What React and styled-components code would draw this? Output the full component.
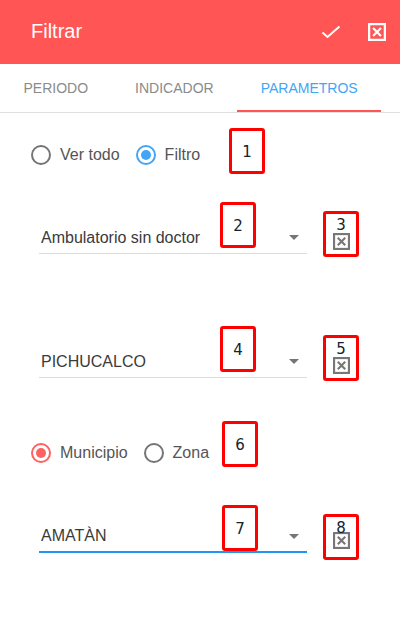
import React from 'react';
import styled, { createGlobalStyle } from 'styled-components';

const Global = createGlobalStyle`
  body {
    margin: 0;
    background: #fff;
    font-family: "Liberation Sans", Arial, sans-serif;
  }
`;

const Sheet = styled.div`
  position: relative;
  width: 400px;
  height: 622px;
  overflow: hidden;
  background: #fff;
`;

const Header = styled.div`
  height: 64px;
  background: #ff5555;
  display: flex;
  align-items: center;
  padding: 0 14px 0 31px;
  color: #fff;
`;

const Title = styled.div`
  flex: 1;
  font-size: 20px;
  margin-top: -1px;
`;

const HeaderButton = styled.div`
  display: flex;
  align-items: center;
  justify-content: center;
  margin-left: ${p => p.gap || 0}px;
`;

const TabBar = styled.div`
  display: flex;
  height: 48px;
  border-bottom: 1px solid #e0e0e0;
`;

const Tab = styled.div`
  display: flex;
  align-items: center;
  padding: 0 23.5px;
  font-size: 14px;
  text-transform: uppercase;
  color: ${p => (p.active ? '#42a5f5' : '#8a8a8a')};
  box-shadow: ${p => (p.active ? 'inset 0 -2px 0 #ff5555' : 'none')};
`;

const Content = styled.div`
  display: flex;
  flex-direction: column;
  padding-left: 31px;
`;

const RadioRow = styled.div`
  display: flex;
  align-items: center;
  height: 40px;
  margin-top: ${p => p.top}px;
`;

const RadioItem = styled.label`
  display: flex;
  align-items: center;
  margin-right: ${p => p.gap}px;
  font-size: 16px;
  color: #555;
`;

const RadioCircle = styled.span`
  box-sizing: border-box;
  width: 20px;
  height: 20px;
  border-radius: 50%;
  border: 2px solid ${p => p.color || '#757575'};
  margin-right: 9px;
  display: flex;
  align-items: center;
  justify-content: center;
  &::after {
    content: '';
    width: 10px;
    height: 10px;
    border-radius: 50%;
    background: ${p => (p.checked ? p.color : 'transparent')};
  }
`;

const SelectRow = styled.div`
  display: flex;
  align-items: center;
  margin-top: ${p => p.top}px;
  padding-left: 8px;
`;

const Select = styled.div`
  box-sizing: border-box;
  width: 268px;
  height: 32px;
  display: flex;
  align-items: center;
  justify-content: space-between;
  padding: 0 8px 0 2px;
  border-bottom: ${p => (p.focused ? '2px solid #2196f3' : '1px solid #dcdcdc')};
  font-size: 16px;
  color: #3a3a3a;
`;

const Arrow = styled.span`
  width: 0;
  height: 0;
  border-left: 5px solid transparent;
  border-right: 5px solid transparent;
  border-top: 5px solid #757575;
`;

const ClearButton = styled.div`
  margin-left: 26px;
  margin-top: 6px;
  width: 17px;
  height: 17px;
  display: flex;
`;

const Marker = styled.div`
  position: absolute;
  box-sizing: border-box;
  width: 36px;
  height: 46px;
  border: 3px solid #ff0000;
  border-radius: 3px;
  padding-top: ${p => (p.tight ? 3 : 13)}px;
  text-align: center;
  font-family: "DejaVu Sans", sans-serif;
  font-size: 15px;
  line-height: 16px;
  color: #13232e;
`;

const CheckIcon = () => (
  <svg width="20" height="14" viewBox="0 0 20 14">
    <path d="M1.5 7.5 L6.5 12 L18.5 1.5" fill="none" stroke="#fff" strokeWidth="2" />
  </svg>
);

const BoxX = ({ size, color, stroke }) => (
  <svg width={size} height={size} viewBox="0 0 16 16">
    <rect x="1" y="1" width="14" height="14" fill="none" stroke={color} strokeWidth={stroke} />
    <path d="M4.5 4.5 L11.5 11.5 M11.5 4.5 L4.5 11.5" stroke={color} strokeWidth={stroke} />
  </svg>
);

const fields = [
  { value: 'Ambulatorio sin doctor', top: 47 },
  { value: 'PICHUCALCO', top: 92 },
];

const markers = [
  { n: 1, x: 229, y: 128 },
  { n: 2, x: 220, y: 202 },
  { n: 3, x: 323, y: 211, tight: true },
  { n: 4, x: 220, y: 326 },
  { n: 5, x: 323, y: 335, tight: true },
  { n: 6, x: 222, y: 421 },
  { n: 7, x: 222, y: 505 },
  { n: 8, x: 323, y: 514, tight: true },
];

export default function App() {
  return (
    <Sheet>
      <Global />
      <Header>
        <Title>Filtrar</Title>
        <HeaderButton><CheckIcon /></HeaderButton>
        <HeaderButton gap={27}><BoxX size={18} color="#fff" stroke={2} /></HeaderButton>
      </Header>
      <TabBar>
        <Tab>Periodo</Tab>
        <Tab>Indicador</Tab>
        <Tab active>Parametros</Tab>
      </TabBar>
      <Content>
        <RadioRow top={22}>
          <RadioItem gap={16}><RadioCircle />Ver todo</RadioItem>
          <RadioItem><RadioCircle checked color="#42a5f5" />Filtro</RadioItem>
        </RadioRow>
        {fields.map(f => (
          <SelectRow key={f.value} top={f.top}>
            <Select>{f.value}<Arrow /></Select>
            <ClearButton><BoxX size={17} color="#777" stroke={2} /></ClearButton>
          </SelectRow>
        ))}
        <RadioRow top={55}>
          <RadioItem gap={16}><RadioCircle checked color="#ff6161" />Municipio</RadioItem>
          <RadioItem><RadioCircle />Zona</RadioItem>
        </RadioRow>
        <SelectRow top={48}>
          <Select focused>AMATÀN<Arrow /></Select>
          <ClearButton><BoxX size={17} color="#777" stroke={2} /></ClearButton>
        </SelectRow>
      </Content>
      {markers.map(m => (
        <Marker key={m.n} tight={m.tight} style={{ left: m.x, top: m.y }}>{m.n}</Marker>
      ))}
    </Sheet>
  );
}
